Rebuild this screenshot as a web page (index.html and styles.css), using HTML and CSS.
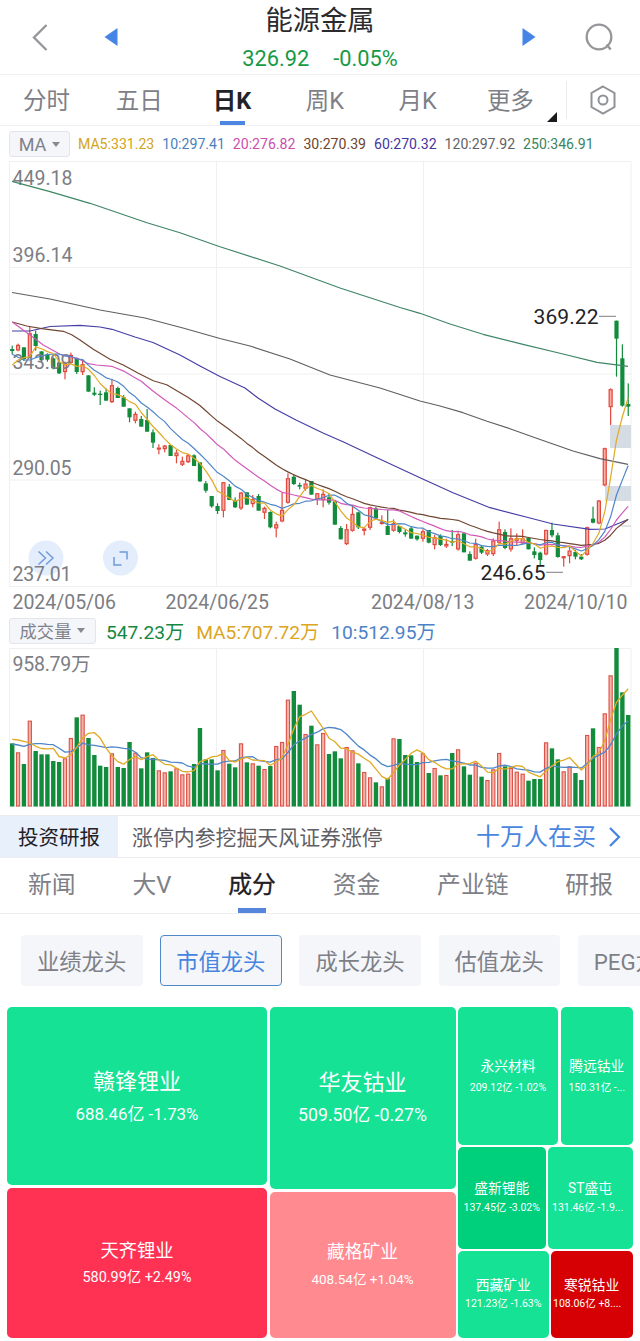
FILE: index.html
```html
<!DOCTYPE html>
<html lang="zh-CN">
<head>
<meta charset="utf-8">
<title>能源金属</title>
<link rel="stylesheet" href="styles.css">
</head>
<body>
<header class="topbar">
  <svg width="18" height="28" viewBox="0 0 18 28"><path d="M15.500 2 3 14.500 15.500 27" fill="none" stroke="#96969a" stroke-width="2.300"/></svg>
  <svg width="14" height="20" viewBox="0 0 14 20"><path d="M13.500 1v18L.5 10z" fill="#4685e6"/></svg>
  <div class="quote">
    <h1>能源金属</h1>
    <div class="quote-values"><span>326.92</span><span>-0.05%</span></div>
  </div>
  <svg width="14" height="20" viewBox="0 0 14 20"><path d="M.5 1v18l13-9z" fill="#4685e6"/></svg>
  <svg class="search" width="30" height="30" viewBox="0 0 30 30"><g fill="none" stroke="#96969a" stroke-width="2.300"><circle cx="15" cy="15" r="12.300"/><path d="m22.500 22.500 4.200 5"/></g></svg>
</header>

<nav class="periods">
  <span>分时</span><span>五日</span><span class="active">日K</span><span>周K</span><span>月K</span><span class="more">更多</span>
  <div class="settings"><svg width="28" height="30" viewBox="0 0 28 30"><g fill="none" stroke="#8f9197" stroke-width="2"><path d="M14 1.500 25.500 8v14L14 28.500 2.500 22V8z"/><circle cx="14" cy="15" r="4.500"/></g></svg></div>
</nav>

<div class="ma-row">
  <span class="select select-ma">MA<i></i></span>
  <span class="c5">MA5:331.23</span><span class="c10">10:297.41</span><span class="c20">20:276.82</span><span class="c30">30:270.39</span><span class="c60">60:270.32</span><span class="c120">120:297.92</span><span class="c250">250:346.91</span>
</div>

<svg class="chart" width="640" height="458" viewBox="0 158 640 458">
  <path class="grid" d="M9.500 161.500h621.500v425H9.500zM9.500 267.500h621.500M9.500 374h621.500M9.500 480h621.500M216.500 161.500v425M423.500 161.500v425"/>
  <path d="M610 425h21v23h-21zM605 486h26v15h-26z" fill="#d5dce4"/>
  <path d="M621 526h10" stroke="#c6cbd1"/>
  <g class="tool"><circle cx="46" cy="558" r="17.500"/><circle cx="120.500" cy="558" r="17.500"/></g>
  <path d="m38.500 551.500 7 6.500-7 6.500m7.500-13 7 6.500-7 6.500M119.500 552h7.500v7.500M114 557v8h7.500" fill="none" stroke="#6f9bdc" stroke-width="1.500"/>
  <g id="candles"></g>
  <g class="axis">
    <text x="12.500" y="184.600" textLength="60">449.18</text>
    <text x="12.500" y="262.300" textLength="60">396.14</text>
    <text x="12.500" y="368.600" textLength="59">343.09</text>
    <text x="12.500" y="474.600" textLength="59">290.05</text>
    <text x="12.500" y="580.600" textLength="59">237.01</text>
    <text x="12.500" y="609" textLength="103.500">2024/05/06</text>
    <text x="165.500" y="609" textLength="103.500">2024/06/25</text>
    <text x="371" y="609" textLength="103.500">2024/08/13</text>
    <text x="524" y="609" textLength="103.500">2024/10/10</text>
  </g>
  <g id="averages" fill="none" stroke-width="1.200" stroke-linejoin="round"></g>
  <path d="M599 316.300h17M546 572.300h17" stroke="#98989c" stroke-width="1.200"/>
  <g class="peak"><text x="533.500" y="324" textLength="65">369.22</text><text x="480.500" y="579.500" textLength="65">246.65</text></g>
</svg>

<div class="volume-row">
  <span class="select select-volume">成交量<i></i></span>
  <span class="v">547.23万</span><span class="v5">MA5:707.72万</span><span class="v10">10:512.95万</span>
</div>

<svg class="chart" width="640" height="170" viewBox="0 645 640 170">
  <path class="grid" d="M9.500 648.500h621.500v158H9.500zM216.500 648.500v158M423.500 648.500v158"/>
  <g class="axis"><text x="12.500" y="671" textLength="78">958.79万</text></g>
  <g id="volumes"></g>
  <g id="volumeAverages" fill="none" stroke-width="1.300" stroke-linejoin="round"></g>
</svg>

<div class="promo">
  <div class="promo-tag">投资研报</div>
  <div class="promo-text">涨停内参挖掘天风证券涨停</div>
  <div class="promo-link">十万人在买<svg width="14" height="22" viewBox="0 0 14 22"><path d="m2 2 9 9-9 9" fill="none" stroke="#4a86df" stroke-width="2.300"/></svg></div>
</div>

<nav class="sections"><span>新闻</span><span>大V</span><span class="active">成分</span><span>资金</span><span>产业链</span><span>研报</span></nav>

<div class="chips"><span>业绩龙头</span><span class="active">市值龙头</span><span>成长龙头</span><span>估值龙头</span><span>PEG龙头</span></div>

<main class="treemap">
  <div class="col col-a">
    <div class="tile up t1"><b>赣锋锂业</b><span>688.46亿 -1.73%</span></div>
    <div class="tile rise t2"><b>天齐锂业</b><span>580.99亿 +2.49%</span></div>
  </div>
  <div class="col col-b">
    <div class="tile up t3"><b>华友钴业</b><span>509.50亿 -0.27%</span></div>
    <div class="tile pale t4"><b>藏格矿业</b><span>408.54亿 +1.04%</span></div>
  </div>
  <div class="col col-c">
    <div class="row row-1">
      <div class="tile up"><b>永兴材料</b><span>209.12亿 -1.02%</span></div>
      <div class="tile up"><b>腾远钴业</b><span>150.31亿 -...</span></div>
    </div>
    <div class="row row-2">
      <div class="tile deep"><b>盛新锂能</b><span>137.45亿 -3.02%</span></div>
      <div class="tile up cut"><b>ST盛屯</b><span>131.46亿 -1.9...</span></div>
    </div>
    <div class="row row-3">
      <div class="tile up"><b>西藏矿业</b><span>121.23亿 -1.63%</span></div>
      <div class="tile hot cut"><b>寒锐钴业</b><span>108.06亿 +8....</span></div>
    </div>
  </div>
</main>
<script src="chart.js"></script>
</body>
</html>
```
FILE: styles.css
```css
* { box-sizing: border-box; }
body {
  margin: 0;
  width: 640px;
  height: 1341px;
  overflow: hidden;
  background: #fff;
  color: #7e8087;
  font-family: Roboto, "Noto Sans CJK SC", sans-serif;
}
svg { display: block; flex: none; }
h1, b { font-weight: 400; margin: 0; }
span { white-space: nowrap; }

.topbar {
  display: grid;
  grid-template-columns: 80px 62px 1fr 62px 80px;
  grid-template-rows: 74px;
  justify-items: center;
  align-items: center;
  height: 75px;
  border-bottom: 1px solid #f0f0f4;
}
.search { margin-right: 3px; }
.quote { display: flex; flex-direction: column; align-items: center; align-self: start; }
.quote h1 { font-size: 27.300px; line-height: 42px; color: #2b2b2e; }
.quote-values {
  display: flex;
  gap: 24px;
  font-size: 21.800px;
  line-height: 34px;
  color: #189a45;
}

.periods {
  display: grid;
  grid-template-columns: repeat(6, 92.800px) 1fr;
  height: 51px;
  border-bottom: 1px solid #f0f0f4;
  font-size: 23.500px;
  line-height: 52px;
  text-align: center;
}
.periods > span { position: relative; height: 50px; }
.periods .active { color: #222326; font-weight: 700; }
.periods .active::after {
  content: "";
  position: absolute;
  left: 34px;
  bottom: 0;
  width: 25px;
  height: 4px;
  background: #4c86e2;
}
.more::after {
  content: "";
  position: absolute;
  right: 0;
  bottom: 3px;
  border-left: 10px solid transparent;
  border-bottom: 10px solid #1b1b1d;
}
.settings {
  display: flex;
  align-items: center;
  justify-content: center;
  height: 38px;
  margin: 6px 0 0 9px;
  border-left: 1px solid #ececf0;
}

.ma-row {
  display: flex;
  align-items: center;
  gap: 8px;
  height: 32px;
  padding: 4px 0 0 9px;
  font-size: 14.100px;
}
.select {
  display: flex;
  align-items: center;
  justify-content: center;
  height: 26px;
  border: 1px solid #e3e5ec;
  border-radius: 3px;
  background: #f5f6fa;
  color: #7e828c;
}
.select i {
  border: 4.500px solid transparent;
  border-top: 5px solid #858991;
  border-bottom: 0;
  margin-left: 6px;
}
.select-ma { width: 61px; font-size: 18px; }
.select-volume { width: 87px; font-size: 17.300px; }
.c5 { color: #d2a520; }
.c10 { color: #4a80bd; }
.c20 { color: #cb4fae; }
.c30 { color: #70442c; }
.c60 { color: #4436a0; }
.c120 { color: #626266; }
.c250 { color: #3b8460; }

.grid { fill: none; stroke: #f0f0f2; }
.tool { fill: #e3edfb; }
.axis { fill: #7c7d83; font-size: 19.500px; }
.peak { fill: #232326; font-size: 21px; }

.volume-row {
  display: flex;
  align-items: center;
  height: 29px;
  padding-left: 9px;
  font-size: 19.200px;
}
.v { color: #15883f; margin-left: 10px; }
.v5 { color: #dca51f; margin-left: 12px; }
.v10 { color: #4c82c8; margin-left: 12px; }

.promo {
  display: flex;
  align-items: center;
  height: 43px;
  border: solid #ededf1;
  border-width: 1px 0;
  line-height: 42px;
}
.promo-tag {
  height: 41px;
  line-height: 44px;
  width: 118px;
  padding-left: 18px;
  background: #e8f0fc;
  color: #1f2125;
  font-size: 20.500px;
}
.promo-text { flex: 1; padding: 2px 0 0 14px; color: #5f6066; font-size: 20.900px; }
.promo-link {
  display: flex;
  align-items: center;
  gap: 12px;
  padding-right: 18px;
  color: #4a86df;
  font-size: 24px;
}

.sections {
  display: flex;
  justify-content: space-between;
  height: 56px;
  padding: 0 27px 0 28px;
  border-bottom: 1px solid #ececf0;
  font-size: 23.800px;
  line-height: 54px;
}
.sections span { position: relative; height: 55px; }
.sections .active { color: #1f2023; -webkit-text-stroke: .3px #1f2023; }
.sections .active::after {
  content: "";
  position: absolute;
  left: 10px;
  bottom: 0;
  width: 28px;
  height: 5px;
  background: #5586db;
}

.chips {
  display: flex;
  gap: 17.700px;
  height: 93px;
  padding: 20.500px 0 0 21px;
  overflow: hidden;
}
.chips span {
  flex: none;
  width: 121.500px;
  height: 51.500px;
  padding-left: 16px;
  border-radius: 4px;
  background: #f5f6fa;
  font-size: 22.300px;
  line-height: 54px;
}
.chips .active {
  padding-left: 15px;
  border: 1px solid #5089c8;
  color: #4685df;
  line-height: 52px;
}

.treemap { display: flex; gap: 2.500px; height: 330.500px; margin: 0 7px; }
.col { display: flex; flex-direction: column; gap: 2.500px; }
.col-a { width: 260px; }
.col-b { width: 186px; }
.col-c { flex: 1; }
.row { display: grid; gap: 2.500px; }
.row-1 { height: 137.500px; grid-template-columns: 100px 1fr; }
.row-2 { height: 101.500px; grid-template-columns: 87.500px 1fr; }
.row-3 { flex: 1; grid-template-columns: 90.500px 1fr; }
.tile {
  display: flex;
  flex-direction: column;
  align-items: center;
  justify-content: center;
  gap: 6px;
  min-width: 0;
  padding-top: 1px;
  border-radius: 5px;
  color: #fff;
  font-size: 10.500px;
  line-height: 14px;
}
.tile b { font-size: 13.800px; }
.row-1 .tile { gap: 8px; padding-top: 2px; }
.row-3 .tile { gap: 5px; }
.cut { align-items: flex-start; padding-left: 4px; }
.row-2 .cut b { padding-left: 16px; }
.row-3 .cut { padding-left: 2px; }
.row-3 .cut b { padding-left: 11px; }
.up { background: #15e294; }
.deep { background: #00cf7c; }
.rise { background: #ff3254; }
.pale { background: #ff8a8f; }
.hot { background: #d60004; }
.t1, .t3 { line-height: 24px; gap: 8px; }
.t1 { height: 178px; font-size: 16.900px; padding-top: 4px; }
.t3 { height: 182px; font-size: 17.700px; padding-top: 1px; }
.t1 b, .t3 b { font-size: 22px; }
.t2, .t4 { flex: 1; line-height: 20px; gap: 7px; padding-top: 3px; }
.t2 { font-size: 14.400px; }
.t4 { font-size: 13.500px; padding-top: 1px; }
.t2 b { font-size: 18.300px; }
.t4 b { font-size: 17.800px; }
```
FILE: chart.js
```js
// Direction, body top, body bottom, wick top, wick bottom and volume top per trading day.
// Prices and volumes are stored in thirds of a pixel, each block with its own base.
const blocks = [
  [310, `G117,123,107,133 R105,121,101,123 G112,147,112,153 R70,142,50,145 G72,108,62,122
G124,150,124,158 G133,149,130,155 G145,175,142,178 G158,190,156,192 R160,186,155,208
R135,158,128,160 G145,186,143,192 R163,186,150,195 G196,245,196,245 G248,254,232,258
G251,255,242,285 G247,272,235,272 R226,276,210,277 G234,264,230,264 G262,290,255,290
G295,322,295,337 R312,332,305,340 G327,350,318,350 G330,365,297,365 G367,398,358,414
R413,416,403,433 R407,417,405,427 G405,438,405,438 R428,438,420,460 R453,464,440,468
R436,456,432,458 G436,468,433,468 G457,514,457,516 G520,542,513,548 G558,589,558,593 G588,603,580,612`],
  [420, `R187,272,187,292 G200,240,192,240 G242,262,232,264 R218,265,216,270 G217,254,217,254
R238,252,225,262 G228,272,222,272 R264,278,260,297 G276,322,274,325 R313,325,305,352
R270,304,218,305 R175,248,160,250 G170,192,163,195 G195,200,188,208 R191,206,180,212
G183,224,183,224 R220,238,220,255 R222,240,208,262 G232,248,220,254 G244,314,242,314
G324,358,318,358 R328,372,312,372 R282,332,256,333 G277,322,275,327 R326,332,322,346
R262,323,260,330 G266,295,260,300 R306,311,286,314 G318,345,270,345 R310,332,298,333
G318,336,318,340 G337,343,328,350 G325,356,320,356 G347,358,347,362`],
  [300, `R694,716,688,725 G690,728,690,730 R712,735,705,748 G708,735,703,738 R732,739,716,744
G724,728,690,738 R703,748,697,752 G700,757,700,757 G762,782,754,782 R732,776,716,778
G740,758,735,762 R751,763,747,768 R722,762,715,768 R688,728,665,730 G696,744,688,748
R715,748,685,755 R715,722,700,735 R715,730,688,733 G714,748,712,748 G754,765,742,775
G758,780,755,795 R690,763,690,766 G690,706,668,712 G706,771,698,773 R769,771,768,800
R752,768,742,790 G756,770,750,778 G770,778,762,780 R682,764,680,767 G656,668,620,670
R602,670,600,673 R445,556,443,558 R268,321,265,375 G62,116,62,230 G175,317,133,320 G312,320,250,348`]
];
const volumeTops = `385 412 447 317 408 418 418 438 441 430 369 307 299 369 420 452 456 415 456 459 381 413
460 412 429 466 472 469 460 478 476 447 339 433 433 466 405 446 457 385 442 445 452 462 453 393 381
254 228 269 357 332 388 354 417 409 430 396 406 445 471 487 502 514 490 370 372 420 421 441 415 474
459 481 480 414 403 454 479 443 485 495 463 414 454 459 470 476 497 492 492 382 400 433 469 454 474
495 360 340 396 295 181 99 232 300`.split(/\s+/).map(v => 615 + v / 3);

const GREEN = '#128c3c', RED = '#e2483d';
const xAt = i => 12.200 + 5.867 * i;
const days = blocks.flatMap(([base, text]) => text.split(/\s+/).map(s => ({
  down: s[0] === 'G',
  y: s.slice(1).split(',').map(v => base + v / 3)
})));
const closes = days.map(d => d.down ? d.y[1] : d.y[0]);

const rect = (x, y, w, h, extra) => `<rect x="${x}" y="${y}" width="${w}" height="${Math.max(h, 1)}" ${extra}/>`;
const line = (pts, color) => `<polyline points="${pts.map(p => p.map(n => n.toFixed(1)).join()).join(' ')}" stroke="${color}"/>`;

function average(values, n, lead) {
  const pts = lead.slice();
  for (let i = n - 1; i < values.length; i++) {
    let sum = 0;
    for (let k = 0; k < n; k++) sum += values[i - k];
    pts.push([xAt(i), sum / n]);
  }
  return pts;
}
const perDay = (base, list) => list.map((v, i) => [xAt(i), base + v / 3]);
const scaled = list => list.map(([x, y]) => [x / 3, 310 + y / 3]);

document.getElementById('candles').innerHTML = days.map((d, i) => {
  const x = xAt(i), [top, bottom, high, low] = d.y;
  if (d.down) {
    return rect(x - .6, high, 1.200, low - high, `fill="${GREEN}"`) + rect(x - 2.100, top, 4.200, bottom - top, `fill="${GREEN}"`);
  }
  return rect(x - .6, high, 1.200, top - high, `fill="${RED}"`) + rect(x - .6, bottom, 1.200, low - bottom, `fill="${RED}"`) +
    rect(x - 1.500, top + .4, 3, bottom - top - .8, `fill="#f7aca4" stroke="${RED}" stroke-width="1.200"`);
}).join('');

document.getElementById('averages').innerHTML = [
  line([[12, 181.300], [50, 191.700], [90, 203.300], [147, 222.700], [180, 232.700], [220, 246.700], [280, 266], [340, 288], [400, 307.500], [420, 313.300], [450, 324], [483, 334.300], [523, 344.300], [563, 354], [597, 362.300], [628, 366.300]], '#3f8566'),
  line([[12, 292.500], [50, 299], [100, 310], [145, 318], [183, 328], [220, 338.500], [250, 346], [290, 359], [330, 375], [380, 388], [420, 401], [440, 406], [463, 412.700], [487, 421.300], [510, 428.700], [533, 437], [553, 444], [573, 451], [600, 458.700], [628, 464.300]], '#606064'),
  line([[12, 331], [30, 331], [50, 326.500], [80, 325.300], [100, 327], [112, 329.300], [135, 337], [153, 342.500], [180, 355], [200, 366], [220, 376.500], [245, 388], [258, 398], [275, 409], [296, 420], [323, 433], [343, 441.700], [377, 457.700], [420, 477.700], [453, 492.700], [490, 507.700], [530, 518], [553, 524], [590, 529.300], [605, 529], [628, 519.500]], '#453fa5'),
  line(average(closes, 30, scaled([[37, 36], [80, 48], [125, 56], [190, 64], [215, 74], [240, 90], [280, 118], [330, 148], [370, 165], [415, 190], [460, 212], [500, 224]])), '#704632'),
  line(average(closes, 20, scaled([[37, 36], [90, 75], [130, 105], [180, 133], [235, 146], [265, 161], [290, 165], [335, 169]])), '#d25aba'),
  line(average(closes, 10, perDay(310, [133, 142, 150, 150, 143, 138, 134, 132, 132])), '#4f86c8'),
  line(average(closes, 5, perDay(310, [165, 150, 143, 140])), '#e0aa25')
].join('');

document.getElementById('volumes').innerHTML = volumeTops.map((y, i) => {
  const x = xAt(i);
  return days[i].down
    ? rect(x - 2.200, y, 4.400, 806.500 - y, `fill="${GREEN}"`)
    : rect(x - 1.600, y + .5, 3.200, 805.500 - y, `fill="#f4b3a6" stroke="#dc5148" stroke-width="1.100"`);
}).join('');

document.getElementById('volumeAverages').innerHTML =
  line(average(volumeTops, 10, perDay(615, [387, 390, 394, 388, 386, 386, 388, 389, 400])), '#4f86c8') +
  line(average(volumeTops, 5, perDay(615, [373, 375, 379, 384])), '#e0aa25');
```
